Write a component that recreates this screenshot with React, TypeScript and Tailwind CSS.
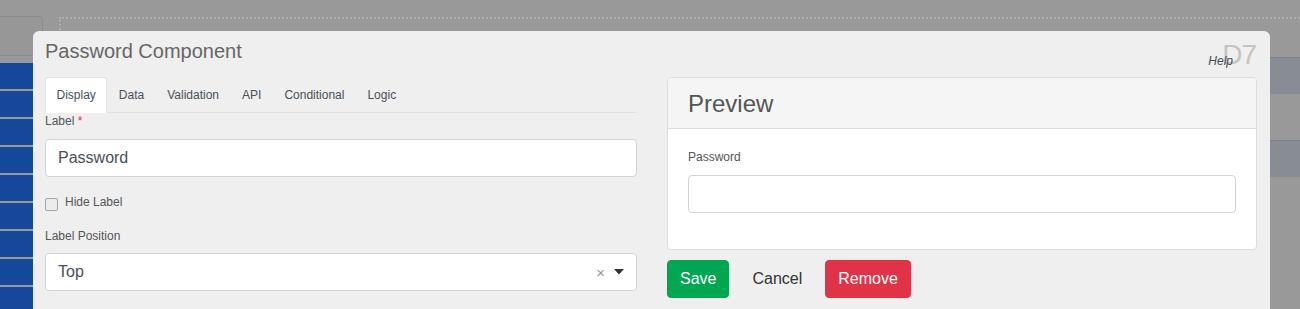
import React from "react";

const tabs = ["Display", "Data", "Validation", "API", "Conditional", "Logic"];
const font = { fontFamily: '"Liberation Sans", Arial, sans-serif' };

function Background() {
  return (
    <div className="absolute inset-0">
      <div className="absolute left-0 top-[16px] w-[43px] h-[40px] border border-l-0 border-[#8c8c8c] rounded-tr-[4px] bg-[#979797]" />
      <div className="absolute left-[59px] top-[17px] right-0 h-[20px] border-t-2 border-l-2 border-dotted border-[#adadad]" />
      <div className="absolute left-0 top-[63px] w-[33px] flex flex-col gap-[2px]">
        {Array.from({ length: 9 }).map((_, i) => (
          <div key={i} className="h-[26px] bg-[#16489a]" />
        ))}
      </div>
      <div className="absolute left-[1270px] right-0 top-[57px] h-[37px] bg-[#888c95] border-t border-[#7d8088]" />
      <div className="absolute left-[1270px] right-0 top-[140px] h-[37px] bg-[#888c95] border-t border-[#7d8088]" />
    </div>
  );
}

function TextInput({ value, children }: { value?: string; children?: React.ReactNode }) {
  return (
    <div className="h-[38px] bg-white border border-[#ced4da] rounded-[4px] flex items-center px-[12px] text-[16px] text-[#495057]">
      <span className="flex-1">{value}</span>
      {children}
    </div>
  );
}

export default function App() {
  return (
    <div className="relative w-[1300px] h-[309px] overflow-hidden bg-[#999999]" style={font}>
      <Background />
      <div className="absolute left-[33px] top-[31px] w-[1237px] h-[300px] bg-[#efefef] rounded-t-[6px] px-[12px] pt-[9px]">
        <h1 className="text-[20px] leading-[22px] text-[#666]">Password Component</h1>
        <div className="absolute right-[14px] top-[8px] text-[28px] leading-[32px] text-[#c4c4c4] tracking-[-1px]">D7</div>
        <div className="absolute right-[37px] top-[22px] text-[12px] leading-[17px] italic text-[#3f4a52]">Help</div>

        <div className="flex gap-[30px] mt-[15px]">
          <div className="w-[592px]">
            <ul className="flex border-b border-[#dee2e6]">
              {tabs.map((t, i) => (
                <li
                  key={t}
                  className={
                    i === 0
                      ? "h-[36px] -mb-px px-[10.5px] flex items-center text-[12px] text-[#495057] bg-white border border-[#dee2e6] border-b-white rounded-t-[4px]"
                      : "h-[36px] -mb-px px-[10.5px] flex items-center text-[12px] text-[#495057] border border-transparent"
                  }
                >
                  {t}
                </li>
              ))}
            </ul>
            <div className="text-[12px] leading-[17px] text-[#555] mb-[9px]">
              Label <span className="text-[#e3342f]">*</span>
            </div>
            <TextInput value="Password" />
            <div className="flex items-start gap-[7px] mt-[17px] h-[17px] text-[12px] leading-[17px] text-[#555]">
              <div className="w-[13px] h-[13px] mt-[4px] rounded-[2px] border border-[#a5a5a5] bg-[#ececec]" />
              <span>Hide Label</span>
            </div>
            <div className="text-[12px] leading-[17px] text-[#555] mt-[17px] mb-[8px]">Label Position</div>
            <TextInput value="Top">
              <span className="text-[15px] text-[#999] mr-[9px] leading-none">×</span>
              <svg width="10" height="6" viewBox="0 0 10 6">
                <path d="M0 0 L10 0 L5 5.5 Z" fill="#333" />
              </svg>
            </TextInput>
          </div>

          <div className="w-[590px]">
            <div className="border border-[#dddddd] rounded-[4px] bg-white overflow-hidden">
              <div className="h-[51px] bg-[#f5f5f5] border-b border-[#dddddd] px-[20px] flex items-center">
                <span className="text-[24px] leading-[28px] text-[#555] mt-[1px]">Preview</span>
              </div>
              <div className="px-[20px] pt-[20px] pb-[36px]">
                <div className="text-[12px] leading-[17px] text-[#555] mb-[9px]">Password</div>
                <TextInput />
              </div>
            </div>
            <div className="flex gap-[10px] mt-[10px]">
              <button className="h-[38px] px-[12px] rounded-[4px] bg-[#00a650] border border-[#00a650] text-white text-[16px]">Save</button>
              <button className="h-[38px] px-[12px] rounded-[4px] border border-transparent text-[#333] text-[16px]">Cancel</button>
              <button className="h-[38px] px-[12px] rounded-[4px] bg-[#e13347] border border-[#e13347] text-white text-[16px]">Remove</button>
            </div>
          </div>
        </div>
      </div>
    </div>
  );
}
